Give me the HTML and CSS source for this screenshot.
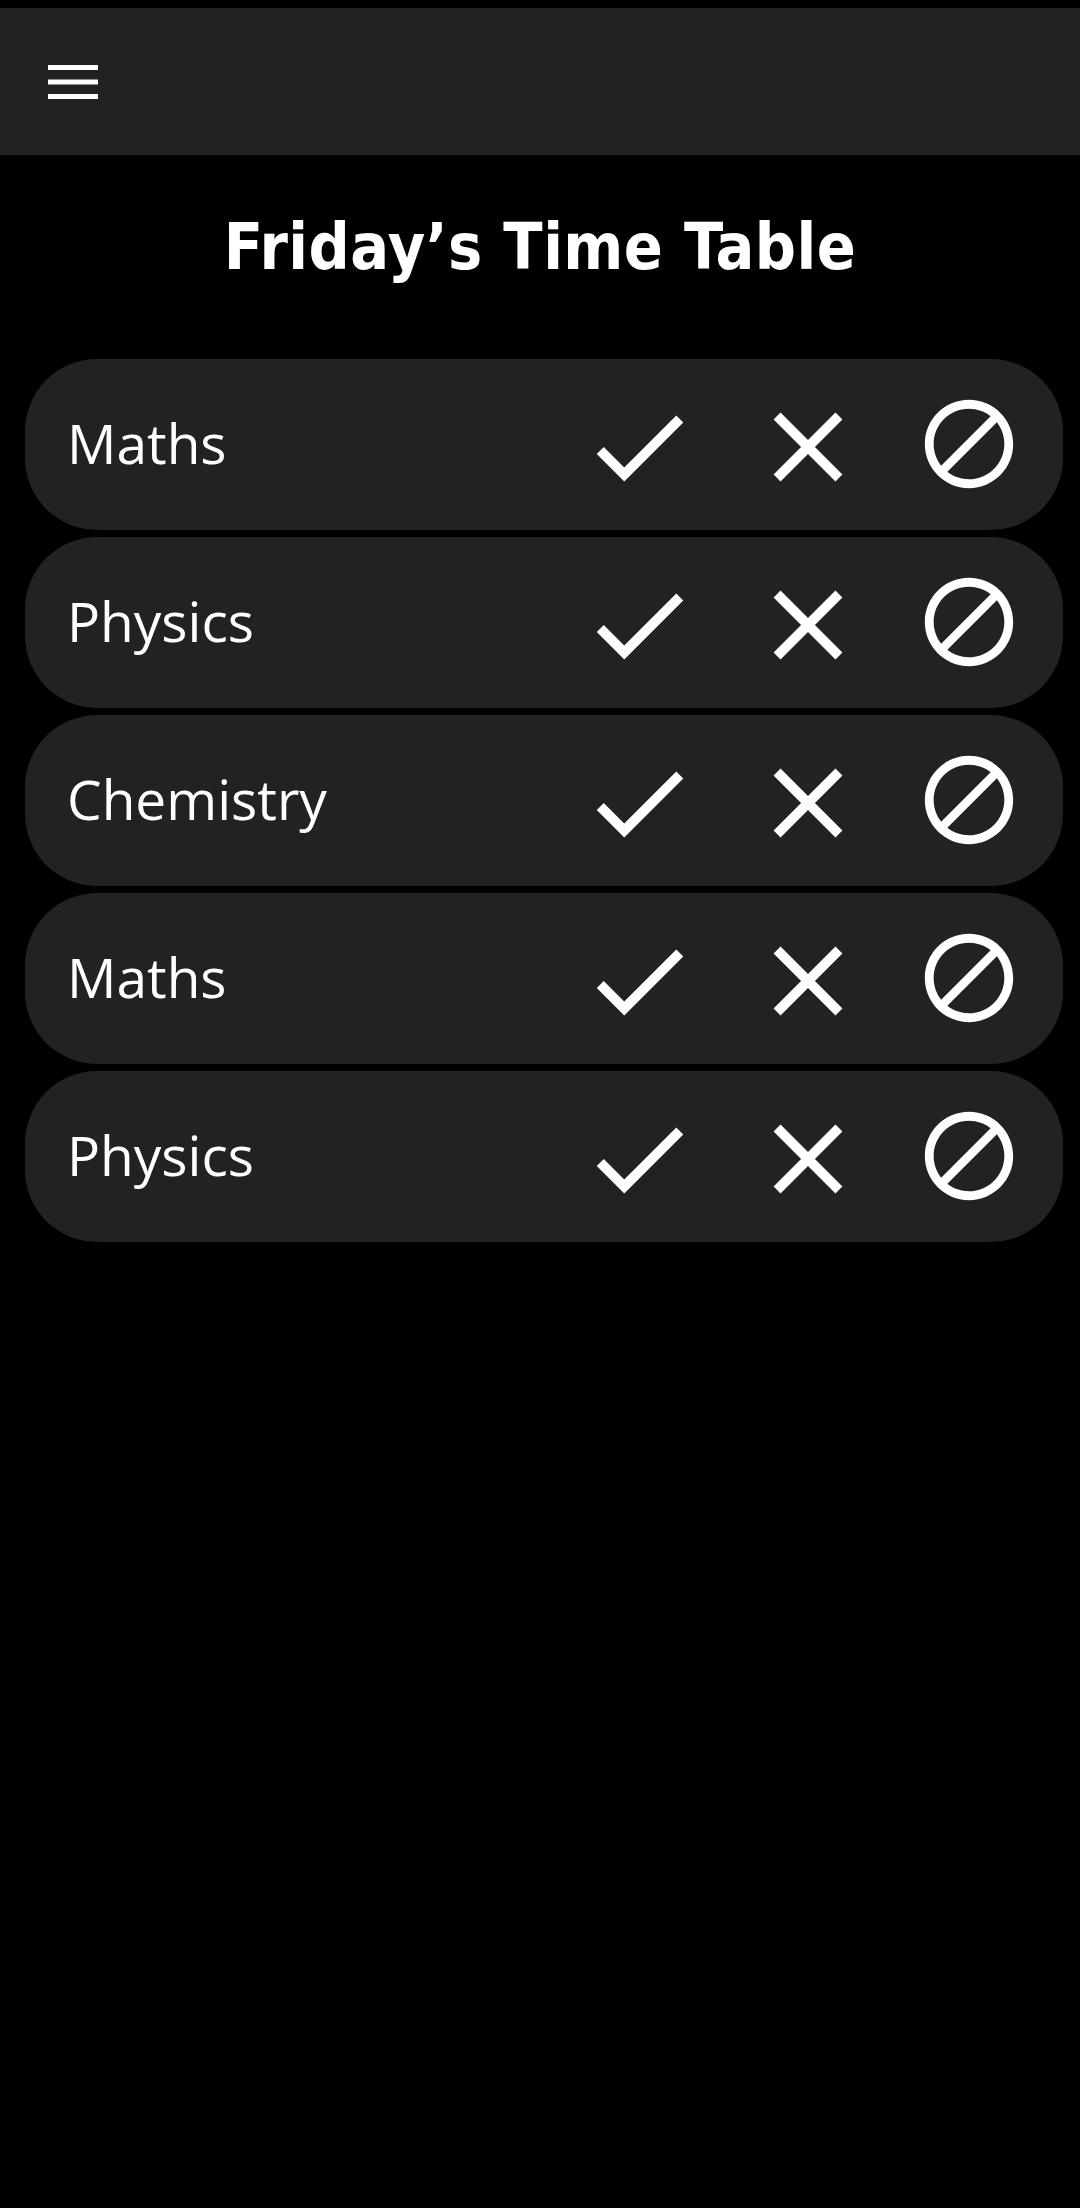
FILE: index.html
```html
<!DOCTYPE html>
<html>
<head>
<meta charset="utf-8">
<link rel="stylesheet" href="styles.css">
</head>
<body>
<header class="appbar">
  <svg class="menu" width="50" height="34" viewBox="0 0 50 34">
    <rect x="0" y="0" width="50" height="5" fill="#fff"/>
    <rect x="0" y="14.5" width="50" height="5" fill="#fff"/>
    <rect x="0" y="29" width="50" height="5" fill="#fff"/>
  </svg>
</header>
<h1 class="title">Friday’s Time Table</h1>
<main class="list">
  <div class="card">
    <span class="name">Maths</span>
    <svg class="ic ic-check" viewBox="0 0 24 24"><path fill="#fff" d="M9 16.17L4.83 12l-1.42 1.41L9 19 21 7l-1.41-1.41z"/></svg>
    <svg class="ic ic-close" viewBox="0 0 24 24"><path fill="#fff" d="M19 6.41L17.59 5 12 10.59 6.41 5 5 6.41 10.59 12 5 17.59 6.41 19 12 13.41 17.59 19 19 17.59 13.41 12z"/></svg>
    <svg class="ic ic-block" viewBox="0 0 24 24"><path fill="#fff" d="M12 2C6.48 2 2 6.48 2 12s4.48 10 10 10 10-4.48 10-10S17.52 2 12 2zM4 12c0-4.42 3.58-8 8-8 1.85 0 3.55.63 4.9 1.69L5.69 16.9C4.63 15.55 4 13.85 4 12zm8 8c-1.85 0-3.55-.63-4.9-1.69L18.31 7.1C19.37 8.45 20 10.15 20 12c0 4.42-3.58 8-8 8z"/></svg>
  </div>
  <div class="card">
    <span class="name">Physics</span>
    <svg class="ic ic-check" viewBox="0 0 24 24"><path fill="#fff" d="M9 16.17L4.83 12l-1.42 1.41L9 19 21 7l-1.41-1.41z"/></svg>
    <svg class="ic ic-close" viewBox="0 0 24 24"><path fill="#fff" d="M19 6.41L17.59 5 12 10.59 6.41 5 5 6.41 10.59 12 5 17.59 6.41 19 12 13.41 17.59 19 19 17.59 13.41 12z"/></svg>
    <svg class="ic ic-block" viewBox="0 0 24 24"><path fill="#fff" d="M12 2C6.48 2 2 6.48 2 12s4.48 10 10 10 10-4.48 10-10S17.52 2 12 2zM4 12c0-4.42 3.58-8 8-8 1.85 0 3.55.63 4.9 1.69L5.69 16.9C4.63 15.55 4 13.85 4 12zm8 8c-1.85 0-3.55-.63-4.9-1.69L18.31 7.1C19.37 8.45 20 10.15 20 12c0 4.42-3.58 8-8 8z"/></svg>
  </div>
  <div class="card">
    <span class="name">Chemistry</span>
    <svg class="ic ic-check" viewBox="0 0 24 24"><path fill="#fff" d="M9 16.17L4.83 12l-1.42 1.41L9 19 21 7l-1.41-1.41z"/></svg>
    <svg class="ic ic-close" viewBox="0 0 24 24"><path fill="#fff" d="M19 6.41L17.59 5 12 10.59 6.41 5 5 6.41 10.59 12 5 17.59 6.41 19 12 13.41 17.59 19 19 17.59 13.41 12z"/></svg>
    <svg class="ic ic-block" viewBox="0 0 24 24"><path fill="#fff" d="M12 2C6.48 2 2 6.48 2 12s4.48 10 10 10 10-4.48 10-10S17.52 2 12 2zM4 12c0-4.42 3.58-8 8-8 1.85 0 3.55.63 4.9 1.69L5.69 16.9C4.63 15.55 4 13.85 4 12zm8 8c-1.85 0-3.55-.63-4.9-1.69L18.31 7.1C19.37 8.45 20 10.15 20 12c0 4.42-3.58 8-8 8z"/></svg>
  </div>
  <div class="card">
    <span class="name">Maths</span>
    <svg class="ic ic-check" viewBox="0 0 24 24"><path fill="#fff" d="M9 16.17L4.83 12l-1.42 1.41L9 19 21 7l-1.41-1.41z"/></svg>
    <svg class="ic ic-close" viewBox="0 0 24 24"><path fill="#fff" d="M19 6.41L17.59 5 12 10.59 6.41 5 5 6.41 10.59 12 5 17.59 6.41 19 12 13.41 17.59 19 19 17.59 13.41 12z"/></svg>
    <svg class="ic ic-block" viewBox="0 0 24 24"><path fill="#fff" d="M12 2C6.48 2 2 6.48 2 12s4.48 10 10 10 10-4.48 10-10S17.52 2 12 2zM4 12c0-4.42 3.58-8 8-8 1.85 0 3.55.63 4.9 1.69L5.69 16.9C4.63 15.55 4 13.85 4 12zm8 8c-1.85 0-3.55-.63-4.9-1.69L18.31 7.1C19.37 8.45 20 10.15 20 12c0 4.42-3.58 8-8 8z"/></svg>
  </div>
  <div class="card">
    <span class="name">Physics</span>
    <svg class="ic ic-check" viewBox="0 0 24 24"><path fill="#fff" d="M9 16.17L4.83 12l-1.42 1.41L9 19 21 7l-1.41-1.41z"/></svg>
    <svg class="ic ic-close" viewBox="0 0 24 24"><path fill="#fff" d="M19 6.41L17.59 5 12 10.59 6.41 5 5 6.41 10.59 12 5 17.59 6.41 19 12 13.41 17.59 19 19 17.59 13.41 12z"/></svg>
    <svg class="ic ic-block" viewBox="0 0 24 24"><path fill="#fff" d="M12 2C6.48 2 2 6.48 2 12s4.48 10 10 10 10-4.48 10-10S17.52 2 12 2zM4 12c0-4.42 3.58-8 8-8 1.85 0 3.55.63 4.9 1.69L5.69 16.9C4.63 15.55 4 13.85 4 12zm8 8c-1.85 0-3.55-.63-4.9-1.69L18.31 7.1C19.37 8.45 20 10.15 20 12c0 4.42-3.58 8-8 8z"/></svg>
  </div>
</main>
</body>
</html>
```
FILE: styles.css
```css
html, body {
  margin: 0;
  padding: 0;
  background: #000;
}
body {
  padding-top: 8px;
  min-height: 2200px;
  color: #fff;
  font-family: "Open Sans", "Noto Sans", sans-serif;
}
.appbar {
  height: 147px;
  background: #222222;
  display: flex;
  align-items: center;
  padding-left: 48px;
}
.menu {
  display: block;
}
.title {
  margin: 54px 0 73px;
  text-align: center;
  font-family: "DejaVu Sans Condensed", "DejaVu Sans", sans-serif;
  font-stretch: condensed;
  font-weight: 700;
  font-size: 64px;
  letter-spacing: 0.5px;
  line-height: 1.2;
  color: #fff;
}
.list {
  display: flex;
  flex-direction: column;
  gap: 7px;
  margin: 0 17px 0 25px;
}
.card {
  height: 171px;
  background: #222222;
  border-radius: 72px;
  display: flex;
  align-items: center;
  padding: 0 41px 0 42px;
}
.name {
  flex: 1;
  font-size: 55px;
  line-height: 1;
  margin-bottom: 3px;
  color: #fff;
}
.ic {
  display: block;
  flex: none;
}
.ic-check {
  width: 118px;
  height: 118px;
  margin-top: 6px;
}
.ic-close {
  width: 118px;
  height: 118px;
  margin-top: 6px;
  margin-left: 51px;
}
.ic-block {
  width: 106px;
  height: 106px;
  margin-left: 49px;
}
```
